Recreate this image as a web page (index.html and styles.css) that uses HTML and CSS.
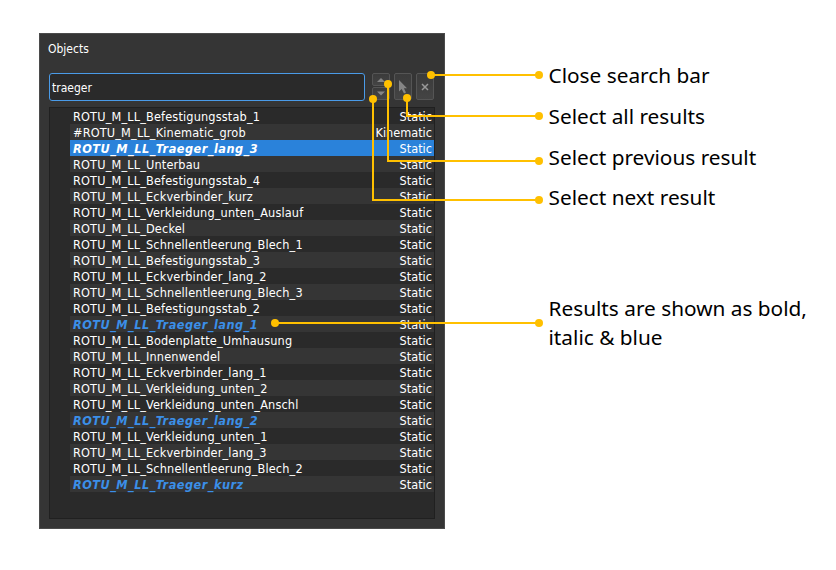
FILE: index.html
```html
<!DOCTYPE html>
<html lang="en">
<head>
<meta charset="utf-8">
<title>Objects</title>
<link rel="stylesheet" href="styles.css">
</head>
<body>
<main class="page">
  <section class="panel">
    <h1 class="title">Objects</h1>
    <div class="toolbar">
      <div class="search">traeger</div>
      <div class="steps">
        <button class="btn small" aria-label="Previous"><svg width="18" height="13"><path d="M5 9L9 5L13 9Z"/></svg></button>
        <button class="btn small" aria-label="Next"><svg width="18" height="13"><path d="M5 4.500L13 4.500L9 8.500Z"/></svg></button>
      </div>
      <button class="btn" aria-label="Select all"><svg width="18" height="27"><path d="M5 7V18.500L7.700 16L10 20.500L12 19.500L9.900 15.300H13Z"/></svg></button>
      <button class="btn" aria-label="Close"><svg width="18" height="27"><path class="cross" d="M6 11L12 17M12 11L6 17"/></svg></button>
    </div>
    <ul class="list">
      <li><span>ROTU_M_LL_Befestigungsstab_1</span><span>Static</span></li>
      <li><span>#ROTU_M_LL_Kinematic_grob</span><span>Kinematic</span></li>
      <li class="hit selected"><span>ROTU_M_LL_Traeger_lang_3</span><span>Static</span></li>
      <li><span>ROTU_M_LL_Unterbau</span><span>Static</span></li>
      <li><span>ROTU_M_LL_Befestigungsstab_4</span><span>Static</span></li>
      <li><span>ROTU_M_LL_Eckverbinder_kurz</span><span>Static</span></li>
      <li><span>ROTU_M_LL_Verkleidung_unten_Auslauf</span><span>Static</span></li>
      <li><span>ROTU_M_LL_Deckel</span><span>Static</span></li>
      <li><span>ROTU_M_LL_Schnellentleerung_Blech_1</span><span>Static</span></li>
      <li><span>ROTU_M_LL_Befestigungsstab_3</span><span>Static</span></li>
      <li><span>ROTU_M_LL_Eckverbinder_lang_2</span><span>Static</span></li>
      <li><span>ROTU_M_LL_Schnellentleerung_Blech_3</span><span>Static</span></li>
      <li><span>ROTU_M_LL_Befestigungsstab_2</span><span>Static</span></li>
      <li class="hit"><span>ROTU_M_LL_Traeger_lang_1</span><span>Static</span></li>
      <li><span>ROTU_M_LL_Bodenplatte_Umhausung</span><span>Static</span></li>
      <li><span>ROTU_M_LL_Innenwendel</span><span>Static</span></li>
      <li><span>ROTU_M_LL_Eckverbinder_lang_1</span><span>Static</span></li>
      <li><span>ROTU_M_LL_Verkleidung_unten_2</span><span>Static</span></li>
      <li><span>ROTU_M_LL_Verkleidung_unten_Anschl</span><span>Static</span></li>
      <li class="hit"><span>ROTU_M_LL_Traeger_lang_2</span><span>Static</span></li>
      <li><span>ROTU_M_LL_Verkleidung_unten_1</span><span>Static</span></li>
      <li><span>ROTU_M_LL_Eckverbinder_lang_3</span><span>Static</span></li>
      <li><span>ROTU_M_LL_Schnellentleerung_Blech_2</span><span>Static</span></li>
      <li class="hit"><span>ROTU_M_LL_Traeger_kurz</span><span>Static</span></li>
    </ul>
  </section>
  <aside class="notes">
    <p>Close search bar</p>
    <p>Select all results</p>
    <p class="near">Select previous result</p>
    <p>Select next result</p>
    <p class="wide">Results are shown as bold,<br>italic &amp; blue</p>
  </aside>
  <svg class="callouts" width="836" height="570">
    <path d="M431 75H539M407 98V116H539M388 84V161H539M373 99V200H539M275 323H539"/>
    <circle cx="431" cy="75" r="4"/><circle cx="539" cy="75" r="4"/>
    <circle cx="407" cy="98" r="4"/><circle cx="539" cy="116" r="4"/>
    <circle cx="388" cy="84" r="4"/><circle cx="539" cy="161" r="4"/>
    <circle cx="373" cy="99" r="4"/><circle cx="539" cy="200" r="4"/>
    <circle cx="275" cy="323" r="4"/><circle cx="539" cy="323" r="4"/>
  </svg>
</main>
</body>
</html>
```
FILE: styles.css
```css
* { box-sizing: border-box; margin: 0; padding: 0; }
body { background: #fff; }
.page { position: relative; width: 836px; height: 570px; padding: 33px 0 0 39px; display: flex; align-items: flex-start; overflow: hidden; }
.panel { width: 406px; height: 496px; flex: none; padding: 0 9px; background: #353535; border: 1px solid #4b4b4b; color: #fff; font: 12.6px/16px "DejaVu Sans Condensed", "DejaVu Sans", sans-serif; font-stretch: condensed; }
.title { font-size: 12px; font-weight: 400; padding: 7px 0 0; height: 39px; margin-left: -1px; }
.toolbar { display: flex; height: 34px; }
.search { width: 316px; height: 28px; margin: 0 7px 0 0; padding: 6px 2px; border: 1px solid #4a9be8; border-radius: 3px; background: #2a2a2a; flex: none; font-size: 12px; }
.steps { display: flex; flex-direction: column; gap: 1px; margin: 0 4px 0 0; }
.btn { width: 18px; height: 27px; flex: none; border: 1px solid #555; border-radius: 2px; background: linear-gradient(#3b3b3b, #444); overflow: hidden; margin-right: 4px; }
.btn.small { height: 13px; margin: 0; }
.btn svg { display: block; margin: -1px; fill: #858585; }
.btn .cross { stroke: #999; stroke-width: 1.5; }
.list { list-style: none; height: 412px; width: 386px; border: 1px solid #202020; background: #2a2a2a; padding-left: 20px; }
.list li { display: flex; justify-content: space-between; height: 16px; padding: 1px 2px 0 3px; white-space: nowrap; letter-spacing: 0.16px; }
.list li span:last-child { letter-spacing: 0; }
.list li:nth-child(even) { background: #353535; }
.list .hit span:first-child { font-weight: 700; font-style: oblique; color: #3b8fe8; letter-spacing: 0.48px; }
.list .selected, .list .selected:nth-child(odd) { background: #2a82da; }
.list .selected span:first-child { color: #fff; }
.notes { padding: 28px 0 0 103.5px; font: 20.8px/29px "Noto Sans", sans-serif; color: #000; white-space: nowrap; }
.notes p { height: 41px; }
.notes .near { height: 40px; }
.notes .wide { padding-top: 70px; }
.callouts { position: absolute; left: 0; top: 0; fill: #ffc000; }
.callouts path { fill: none; stroke: #ffc000; stroke-width: 2; }
```
